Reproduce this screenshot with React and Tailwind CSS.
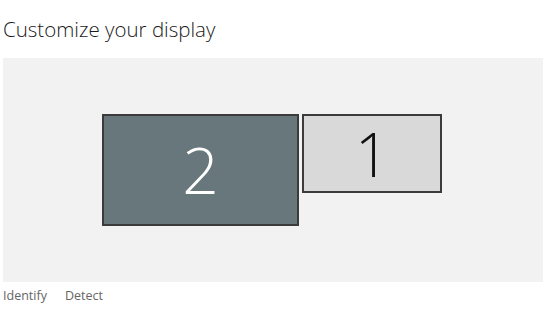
const Monitor = ({ number, className, textClass }) => (
    <div className={`flex items-center justify-center border-2 border-[#3b3b3b] ${className}`}>
        <span className={`font-light leading-none ${textClass}`}>{number}</span>
    </div>
);

const App = () => {
    return (
        <div className="w-[560px] h-[310px] bg-white font-['Open_Sans',sans-serif] overflow-hidden">
            <h1 className="pl-[3px] pt-[16px] text-[20.5px] font-light text-[#1a1a1a] leading-[26px]">
                Customize your display
            </h1>

            {/* Display arrangement area */}
            <div className="ml-[3px] mt-[16px] w-[540px] h-[224px] bg-[#f2f2f2] flex items-center justify-center">
                <div className="flex items-start gap-[3px] ml-[-2px]">
                    <Monitor
                        number="2"
                        className="w-[197px] h-[112px] bg-[#68777b]"
                        textClass="text-[64px] text-white"
                    />
                    <Monitor
                        number="1"
                        className="w-[140px] h-[79px] bg-[#d9d9d9]"
                        textClass="text-[60px] text-[#111]"
                    />
                </div>
            </div>

            <div className="flex gap-[18px] pl-[3px] pt-[6px] text-[12.5px] text-[#666] leading-[16px]">
                <span>Identify</span>
                <span>Detect</span>
            </div>
        </div>
    );
};

export default App;
